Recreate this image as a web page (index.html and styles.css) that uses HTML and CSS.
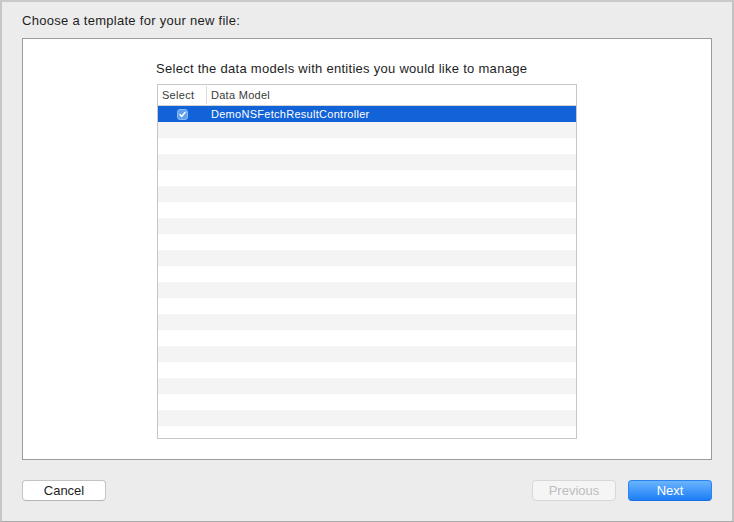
FILE: index.html
```html
<!DOCTYPE html>
<html>
<head>
<meta charset="utf-8">
<link rel="stylesheet" href="styles.css">
</head>
<body>
<div class="window">
  <div class="title">Choose a template for your new file:</div>
  <div class="panel">
    <div class="content">
      <div class="heading">Select the data models with entities you would like to manage</div>
      <div class="table">
        <div class="thead">
          <div class="th col-select">Select</div>
          <div class="th col-model">Data Model</div>
        </div>
        <div class="tbody">
          <div class="row selected">
            <div class="cell col-select">
              <svg class="check" width="11" height="11" viewBox="0 0 11 11">
                <rect x="0.5" y="0.5" width="10" height="10" rx="2.5" fill="#5f9ff1" stroke="#8bbaf5"/>
                <path d="M3 5.6 L4.7 7.4 L8 3.4" fill="none" stroke="#ffffff" stroke-width="1.5" stroke-linecap="round" stroke-linejoin="round"/>
              </svg>
            </div>
            <div class="cell col-model">DemoNSFetchResultController</div>
          </div>
          <div class="row"></div><div class="row"></div><div class="row"></div><div class="row"></div>
          <div class="row"></div><div class="row"></div><div class="row"></div><div class="row"></div>
          <div class="row"></div><div class="row"></div><div class="row"></div><div class="row"></div>
          <div class="row"></div><div class="row"></div><div class="row"></div><div class="row"></div>
          <div class="row"></div><div class="row"></div><div class="row"></div><div class="row"></div>
        </div>
      </div>
    </div>
  </div>
  <div class="buttons">
    <button class="btn">Cancel</button>
    <div class="spacer"></div>
    <button class="btn disabled">Previous</button>
    <button class="btn primary">Next</button>
  </div>
</div>
</body>
</html>
```
FILE: styles.css
```css
html, body {
  margin: 0;
  padding: 0;
  background: #ececec;
}
.window {
  width: 734px;
  height: 522px;
  box-sizing: border-box;
  background: #ececec;
  border-top: 2px solid #cacaca;
  border-left: 2px solid #c6c6c6;
  border-right: 2px solid #c2c2c2;
  border-bottom: 1px solid #a8a8a8;
  font-family: "Liberation Sans", Arial, sans-serif;
  color: #1e1e1e;
  display: flex;
  flex-direction: column;
}
.title {
  height: 36px;
  box-sizing: border-box;
  padding: 11px 0 0 20px;
  font-size: 13px;
  line-height: 16px;
  letter-spacing: 0.28px;
}
.panel {
  margin: 0 20px;
  height: 422px;
  box-sizing: border-box;
  border: 1px solid #9c9c9c;
  background: #ffffff;
}
.content {
  width: 420px;
  margin: 0 auto;
}
.heading {
  padding-top: 22px;
  margin-left: -1px;
  font-size: 13px;
  line-height: 16px;
  letter-spacing: 0.28px;
  color: #1e1e1e;
}
.table {
  margin-top: 7px;
  height: 355px;
  box-sizing: border-box;
  border: 1px solid #c6c6c6;
  overflow: hidden;
  font-size: 11px;
  letter-spacing: 0.28px;
}
.thead {
  display: flex;
  height: 21px;
  box-sizing: border-box;
  border-bottom: 1px solid #d4d4d4;
  color: #3a3a3a;
}
.th {
  margin-top: 1px;
  height: 18px;
  line-height: 18px;
}
.th.col-select {
  width: 49px;
  padding-left: 4px;
  box-sizing: border-box;
  border-right: 1px solid #dcdcdc;
}
.th.col-model {
  padding-left: 4px;
}
.tbody {
  display: flex;
  flex-direction: column;
}
.row {
  height: 16px;
  flex: none;
  display: flex;
}
.row:nth-child(even) {
  background: #f4f4f4;
}
.row.selected {
  background: #1262d8;
  color: #ffffff;
}
.cell.col-select {
  width: 48px;
  display: flex;
  align-items: center;
  justify-content: center;
}
.cell.col-model {
  padding: 1px 0 0 5px;
  line-height: 15px;
}
.check {
  display: block;
}
.buttons {
  display: flex;
  align-items: flex-start;
  margin-top: 20px;
  padding: 0 20px 0 20px;
}
.spacer {
  flex: 1;
}
.btn {
  width: 84px;
  height: 21px;
  box-sizing: border-box;
  padding: 0;
  border-radius: 4px;
  border: 1px solid #c4c4c4;
  border-bottom-color: #b4b4b4;
  background: #ffffff;
  font-family: "Liberation Sans", Arial, sans-serif;
  font-size: 13px;
  line-height: 19px;
  color: #1e1e1e;
}
.btn.disabled {
  background: #f5f5f5;
  border-color: #d8d8d8;
  color: #bdbdbd;
  margin-right: 12px;
}
.btn.primary {
  border: 1px solid #2b82f2;
  border-bottom-color: #1b6ee6;
  background: linear-gradient(#6ab4fd, #1c7ef7);
  color: #ffffff;
}
```
